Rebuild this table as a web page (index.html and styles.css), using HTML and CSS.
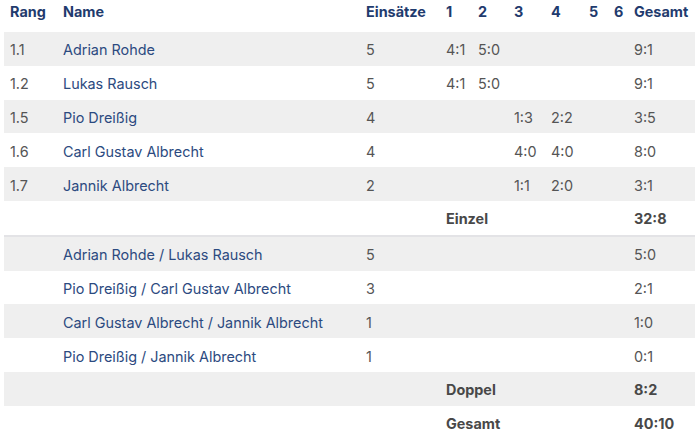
FILE: index.html
```html
<!DOCTYPE html>
<html lang="de">
<head>
<meta charset="utf-8">
<link rel="stylesheet" href="styles.css">
</head>
<body>
<table class="stats">
  <colgroup>
    <col class="c-rang"><col class="c-name"><col class="c-eins">
    <col class="c-1"><col class="c-2"><col class="c-3"><col class="c-4"><col class="c-5"><col class="c-6">
    <col class="c-ges">
  </colgroup>
  <thead>
    <tr><th>Rang</th><th>Name</th><th>Einsätze</th><th>1</th><th>2</th><th>3</th><th>4</th><th>5</th><th>6</th><th>Gesamt</th></tr>
  </thead>
  <tbody>
    <tr class="alt"><td>1.1</td><td class="name">Adrian Rohde</td><td>5</td><td>4:1</td><td>5:0</td><td></td><td></td><td></td><td></td><td>9:1</td></tr>
    <tr><td>1.2</td><td class="name">Lukas Rausch</td><td>5</td><td>4:1</td><td>5:0</td><td></td><td></td><td></td><td></td><td>9:1</td></tr>
    <tr class="alt"><td>1.5</td><td class="name">Pio Dreißig</td><td>4</td><td></td><td></td><td>1:3</td><td>2:2</td><td></td><td></td><td>3:5</td></tr>
    <tr><td>1.6</td><td class="name">Carl Gustav Albrecht</td><td>4</td><td></td><td></td><td>4:0</td><td>4:0</td><td></td><td></td><td>8:0</td></tr>
    <tr class="alt"><td>1.7</td><td class="name">Jannik Albrecht</td><td>2</td><td></td><td></td><td>1:1</td><td>2:0</td><td></td><td></td><td>3:1</td></tr>
    <tr class="sum"><td></td><td></td><td></td><td colspan="6">Einzel</td><td>32:8</td></tr>
  </tbody>
  <tbody class="doubles">
    <tr class="alt"><td></td><td class="name">Adrian Rohde / Lukas Rausch</td><td>5</td><td></td><td></td><td></td><td></td><td></td><td></td><td>5:0</td></tr>
    <tr><td></td><td class="name">Pio Dreißig / Carl Gustav Albrecht</td><td>3</td><td></td><td></td><td></td><td></td><td></td><td></td><td>2:1</td></tr>
    <tr class="alt"><td></td><td class="name">Carl Gustav Albrecht / Jannik Albrecht</td><td>1</td><td></td><td></td><td></td><td></td><td></td><td></td><td>1:0</td></tr>
    <tr><td></td><td class="name">Pio Dreißig / Jannik Albrecht</td><td>1</td><td></td><td></td><td></td><td></td><td></td><td></td><td>0:1</td></tr>
    <tr class="alt sum"><td></td><td></td><td></td><td colspan="6">Doppel</td><td>8:2</td></tr>
    <tr class="sum"><td></td><td></td><td></td><td colspan="6">Gesamt</td><td>40:10</td></tr>
  </tbody>
</table>
</body>
</html>
```

FILE: styles.css
```css
html, body {
  margin: 0;
  padding: 0;
  background: #ffffff;
}

body {
  font-family: Inter, "Open Sans", "DejaVu Sans", sans-serif;
  font-size: 14.4px;
  color: #555555;
}

.stats {
  margin-left: 4px;
  width: 691px;
  table-layout: fixed;
  border-collapse: collapse;
  border-spacing: 0;
}

.c-rang { width: 53px; }
.c-name { width: 303px; }
.c-eins { width: 80px; }
.c-1 { width: 32px; }
.c-2 { width: 36px; }
.c-3 { width: 37px; }
.c-4 { width: 38px; }
.c-5 { width: 25px; }
.c-6 { width: 20px; }
.c-ges { width: 67px; }

.stats th,
.stats td {
  padding: 0 0 0 6px;
  text-align: left;
  white-space: nowrap;
  overflow: visible;
}

.stats th {
  height: 32px;
  padding-bottom: 9px;
  box-sizing: border-box;
  font-weight: 700;
  color: #1f3b6e;
}

.stats td {
  height: 31.8px;
  padding-top: 2px;
  font-weight: 400;
}

.stats tr.alt td {
  background: #efefef;
}

.stats td.name {
  color: #2c4a80;
}

.stats tr.sum td {
  font-weight: 700;
  color: #484848;
}

.doubles tr:first-child td {
  border-top: 2px solid #e3e3e6;
}
```
